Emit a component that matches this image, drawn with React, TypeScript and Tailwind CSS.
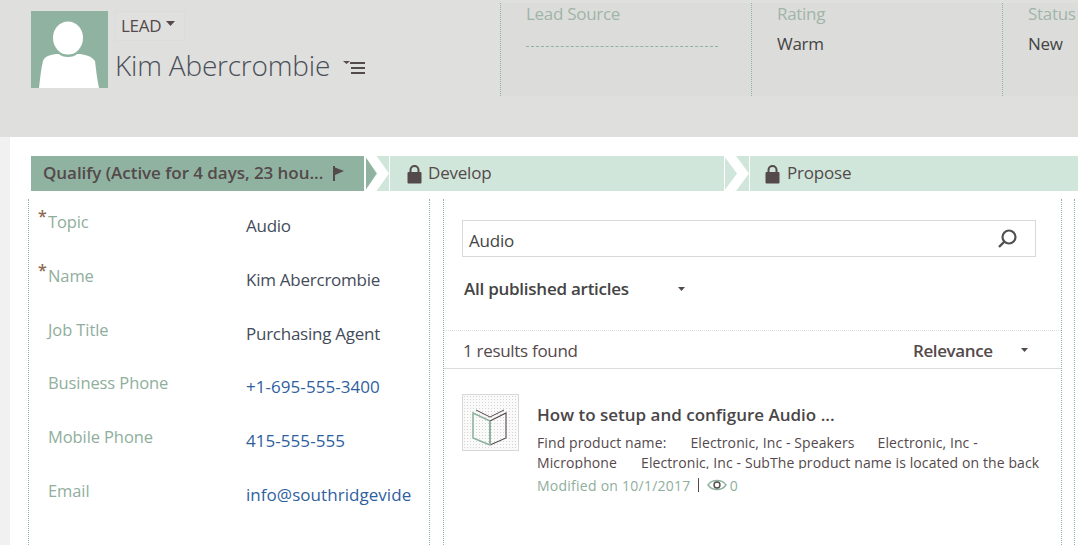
const font = { fontFamily: '"Open Sans", "Noto Sans", sans-serif' };

function Chevron({ left, wide }: { left: string; wide?: boolean }) {
  return (
    <svg width={wide ? 26 : 25} height="35" viewBox="0 0 26 35" preserveAspectRatio="none" className="shrink-0 block">
      <rect width="26" height="35" fill="#d0e6da" />
      <polygon points="0,0 12,17.5 0,35" fill={left} />
      <polygon points="0,0 12,0 25,17.5 12,35 0,35 13,17.5" fill="#ffffff" />
      <rect width="1" height="35" fill="#ffffff" />
      <rect x="25" width="1" height="35" fill="#ffffff" />
    </svg>
  );
}

function Lock() {
  return (
    <svg width="15" height="20" viewBox="0 0 15 20" className="shrink-0">
      <path d="M3.5 9V6a4 4 0 0 1 8 0v3" fill="none" stroke="#54494b" strokeWidth="2" />
      <rect x="0.5" y="8" width="14" height="11.5" rx="1" fill="#54494b" />
    </svg>
  );
}

function Stat({ label, value, empty }: { label: string; value?: string; empty?: boolean }) {
  return (
    <div className="w-[251px] shrink-0 h-[93px] bg-[#dcdcda] border-l border-dotted border-[#8fb3a0] pl-[25px] pt-[1px]">
      <div className="text-[17px] leading-[20px] text-[#9fb5a8] tracking-[-0.3px]">{label}</div>
      {empty ? (
        <div className="mt-[22px] w-[192px] border-t border-dashed border-[#8fb3a0]" />
      ) : (
        <div className="mt-[10px] text-[17px] leading-[20px] text-[#444444] tracking-[-0.3px]">{value}</div>
      )}
    </div>
  );
}

function Field({ label, value, required, link }: { label: string; value: string; required?: boolean; link?: boolean }) {
  return (
    <div className="h-[53.8px] flex">
      <div className="w-[217px] shrink-0 flex items-start pt-[13px] relative pl-[19px]">
        {required && <span className="absolute left-[9px] top-[9px] text-[16px] leading-[16px] font-semibold text-[#8a6a50]">*</span>}
        <span className="text-[16.5px] leading-[20px] text-[#8fae9c] tracking-[-0.1px]">{label}</span>
      </div>
      <div className={`pt-[17px] text-[17px] leading-[20px] whitespace-nowrap ${link ? 'text-[#2f5f9e] tracking-[0.05px]' : 'text-[#444c5a] tracking-[-0.25px]'}`}>{value}</div>
    </div>
  );
}

export default function App() {
  return (
    <div className="w-[1078px] h-[545px] overflow-hidden bg-white" style={font}>
      <header className="h-[137px] bg-[#dfdfdd] flex items-start">
        <div className="w-[500px] shrink-0 flex pl-[31px] pt-[11px]">
          <div className="w-[77px] h-[77px] bg-[#8fb3a0] shrink-0">
            <svg width="77" height="77" viewBox="0 0 77 77" className="block">
              <ellipse cx="37" cy="27" rx="15" ry="16.5" fill="#fff" />
              <path d="M8 77 C9 68 10 58 12 50 C14 45 20 43 28 43 C31 47 43 47 46 43 C54 43 60 45 64 50 C65 58 66 68 68 77 Z" fill="#fff" />
            </svg>
          </div>
          <div className="ml-[7px]">
            <div className="w-[70px] h-[30px] bg-[#e0e0de] border border-[#dcdcda] flex items-center pl-[5px] gap-[5px]">
              <span className="text-[17px] leading-[20px] text-[#54494b] tracking-[-0.3px]">LEAD</span>
              <svg width="9" height="5" viewBox="0 0 9 5" className="mb-[5px]"><polygon points="0,0 9,0 4.5,5" fill="#54494b" /></svg>
            </div>
            <div className="flex items-center mt-[3px]">
              <span className="text-[28px] leading-[42px] font-light text-[#4a4f58] tracking-[-0.2px] whitespace-nowrap">Kim Abercrombie</span>
              <svg width="22" height="14" viewBox="0 0 22 14" className="ml-[13px] mt-[4px]">
                <polygon points="0,1 7,1 3.5,4" fill="#54494b" />
                <rect x="7" y="2" width="15" height="2" fill="#54494b" />
                <rect x="8" y="7" width="14" height="2" fill="#54494b" />
                <rect x="8" y="12" width="14" height="2" fill="#54494b" />
              </svg>
            </div>
          </div>
        </div>
        <div className="flex mt-[3px]">
          <Stat label="Lead Source" empty />
          <Stat label="Rating" value="Warm" />
          <Stat label="Status" value="New" />
        </div>
      </header>

      <div className="flex h-[408px]">
        <div className="w-[10px] shrink-0 bg-[#f1f1f1]" />
        <main className="flex-1 bg-white min-w-0">
          <div className="flex pl-[21px] pt-[19px] h-[54px]">
            <div className="w-[333px] shrink-0 h-[35px] bg-[#8fb3a0] flex items-center pl-[12px] gap-[9px] mr-[1px]">
              <span className="text-[17px] leading-[33px] pb-[2px] font-semibold text-[#54494b] tracking-[-0.05px] whitespace-nowrap">Qualify (Active for 4 days, 23 hou...</span>
              <svg width="12" height="15" viewBox="0 0 12 15"><path d="M1 0h2v1.5L12 5 3 9v6H1z" fill="#54494b" /></svg>
            </div>
            <Chevron left="#8fb3a0" />
            <div className="w-[334px] shrink-0 h-[35px] bg-[#d0e6da] flex items-center pl-[17px] gap-[6px]">
              <Lock />
              <span className="text-[17px] leading-[33px] pb-[2px] text-[#54494b] tracking-[-0.2px]">Develop</span>
            </div>
            <Chevron left="#d0e6da" wide />
            <div className="flex-1 h-[35px] bg-[#d0e6da] flex items-center pl-[15px] gap-[7px]">
              <Lock />
              <span className="text-[17px] leading-[33px] pb-[2px] text-[#54494b] tracking-[-0.2px]">Propose</span>
            </div>
          </div>

          <div className="flex pl-[18px] mt-[8px] h-[346px]">
            <section className="w-[402px] shrink-0 border-x border-dotted border-[#8fb3a0]">
              <Field label="Topic" value="Audio" required />
              <Field label="Name" value="Kim Abercrombie" required />
              <Field label="Job Title" value="Purchasing Agent" />
              <Field label="Business Phone" value="+1-695-555-3400" link />
              <Field label="Mobile Phone" value="415-555-555" link />
              <Field label="Email" value="info@southridgevide" link />
            </section>

            <section className="w-[619px] shrink-0 ml-[13px] border-x border-dotted border-[#8fb3a0]">
              <div className="px-[18px] pt-[21px]">
                <div className="w-[574px] h-[37px] border border-[#d8d8d8] flex items-center justify-between pl-[6px] pr-[18px]">
                  <span className="text-[17px] leading-[20px] pt-[4px] h-[24px] text-[#444444] tracking-[-0.2px]">Audio</span>
                  <svg width="20" height="20" viewBox="0 0 20 20">
                    <circle cx="12" cy="8" r="6.5" fill="none" stroke="#505050" strokeWidth="2.2" />
                    <path d="M7.5 12.5 L2 18" stroke="#505050" strokeWidth="2.4" />
                  </svg>
                </div>
                <div className="flex items-center mt-[20px] h-[24px] pl-[2px]">
                  <span className="w-[214px] text-[17px] font-semibold text-[#444444] tracking-[-0.25px] whitespace-nowrap">All published articles</span>
                  <svg width="7" height="4" viewBox="0 0 7 4"><polygon points="0,0 7,0 3.5,4" fill="#54494b" /></svg>
                </div>
              </div>
              <div className="mt-[29px] h-[39px] border-y border-[#dddddd] [border-top-style:dotted] flex items-center pl-[19px] pr-[33px] justify-between">
                <span className="text-[17px] leading-[20px] pt-[2px] h-[22px] text-[#54494b] tracking-[-0.3px]">1 results found</span>
                <div className="flex items-center">
                  <span className="w-[108px] text-[17px] leading-[20px] pt-[2px] h-[22px] font-semibold text-[#54494b] tracking-[-0.4px]">Relevance</span>
                  <svg width="7" height="4" viewBox="0 0 7 4"><polygon points="0,0 7,0 3.5,4" fill="#54494b" /></svg>
                </div>
              </div>
              <div className="flex pl-[18px] pt-[25px]">
                <div className="w-[57px] h-[57px] shrink-0 border border-[#d8d8d8] bg-[#fafafa] bg-[radial-gradient(#d4d4d4_0.7px,transparent_0.8px)] bg-[length:3px_3px]">
                  <svg width="55" height="55" viewBox="0 0 55 55" fill="none" className="block">
                    <path d="M27 26 L10 18 V43 L27 50" stroke="#8fb3a0" strokeWidth="1.6" />
                    <path d="M27 26 L43 18 V43 L27 50" stroke="#54494b" strokeWidth="1.1" />
                    <path d="M13 15 L27 22 L41 15" stroke="#54494b" strokeWidth="1" />
                    <path d="M27 26 V50" stroke="#8fb3a0" strokeWidth="2" />
                  </svg>
                </div>
                <div className="ml-[18px] w-[512px]">
                  <div className="text-[17px] leading-[22px] font-semibold text-[#4a4648] mt-[10px] whitespace-nowrap">How to setup and configure Audio ...</div>
                  <div className="mt-[7px] h-[36px] overflow-hidden text-[14px] leading-[20px] text-[#54494b] tracking-[0.1px]">
                    <div className="whitespace-nowrap">Find product name:<span className="ml-[24px]">Electronic, Inc - Speakers</span><span className="ml-[23px]">Electronic, Inc -</span></div>
                    <div className="whitespace-nowrap">Microphone<span className="ml-[24px]">Electronic, Inc - SubThe product name is located on the back</span></div>
                  </div>
                  <div className="flex items-center h-[20px] mt-[6px] text-[14px] text-[#8fae9c] tracking-[0.25px]">
                    <span className="whitespace-nowrap">Modified on 10/1/2017</span>
                    <span className="ml-[7px] w-[1px] h-[14px] bg-[#54494b]" />
                    <svg width="20" height="14" viewBox="0 0 20 14" fill="none" className="ml-[8px]">
                      <path d="M1 7 C5 1 15 1 19 7 C15 13 5 13 1 7 Z" stroke="#8fb3a0" strokeWidth="1.4" />
                      <circle cx="10" cy="7" r="3" stroke="#54494b" strokeWidth="1.4" />
                    </svg>
                    <span className="ml-[3px]">0</span>
                  </div>
                </div>
              </div>
            </section>

            <div className="ml-[12px] flex-1 border-l border-dotted border-[#8fb3a0]" />
          </div>
        </main>
      </div>
    </div>
  );
}
